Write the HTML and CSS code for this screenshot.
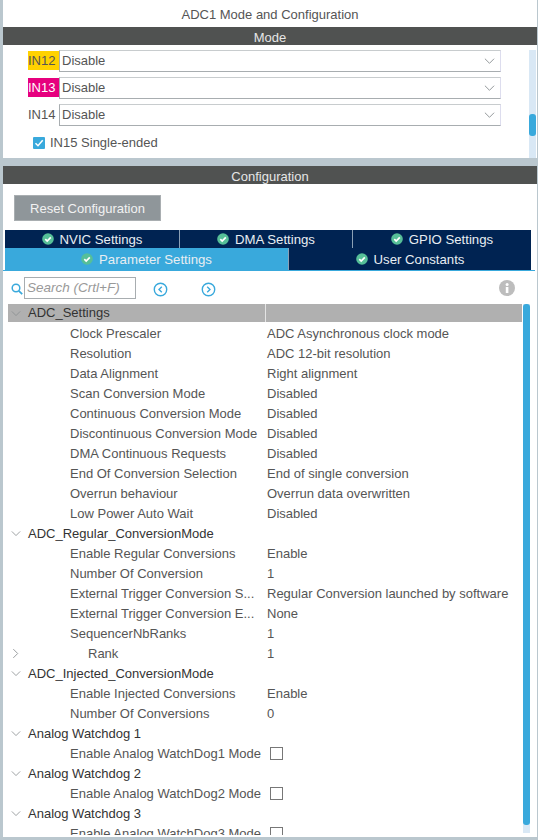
FILE: index.html
```html
<!DOCTYPE html>
<html lang="en">
<head>
<meta charset="UTF-8" />
<title>ADC1 Mode and Configuration</title>
<link rel="stylesheet" href="styles.css">
</head>
<body>

<svg class="defs" width="0" height="0">
  <symbol id="ok" viewBox="0 0 12 12">
    <circle cx="6" cy="6" r="5.8" fill="#56bf98" />
    <path d="M3.3 6.1 5.2 8 8.8 4.3" fill="none" stroke="#fff" stroke-width="1.7" />
  </symbol>
  <symbol id="down" viewBox="0 0 12 8">
    <path d="M1 1.5 6 6.5 11 1.5" fill="none" stroke="#8a8f92" stroke-width="1" />
  </symbol>
  <symbol id="right" viewBox="0 0 8 12">
    <path d="M1.5 1 6.5 6 1.5 11" fill="none" stroke="#8a8f92" stroke-width="1" />
  </symbol>
</svg>

<div class="page">
  <div class="panel mode-panel">
    <div class="title">ADC1 Mode and Configuration</div>
    <div class="bar">Mode</div>
    <div class="mode-body">
      <div class="mode-list">
        <div class="mode-row">
          <span class="pin pin-yellow">IN12</span>
          <div class="select">Disable <svg class="chev"><use href="#down" /></svg></div>
        </div>
        <div class="mode-row">
          <span class="pin pin-pink">IN13</span>
          <div class="select">Disable <svg class="chev"><use href="#down" /></svg></div>
        </div>
        <div class="mode-row">
          <span class="pin">IN14</span>
          <div class="select">Disable <svg class="chev"><use href="#down" /></svg></div>
        </div>
        <label class="single">
          <svg class="tick" viewBox="0 0 12 12">
            <rect width="12" height="12" rx="1" fill="#39a9dc" />
            <path d="M2.5 6.2 5 8.7 9.7 3.2" fill="none" stroke="#fff" stroke-width="1.5" />
          </svg>
          IN15 Single-ended
        </label>
      </div>
      <div class="track top-track"><div class="thumb top-thumb"></div></div>
    </div>
  </div>

  <div class="panel config-panel">
    <div class="bar">Configuration</div>
    <button class="reset">Reset Configuration</button>

    <div class="tabs">
      <div class="tab-row tab-row-a">
        <div class="tab"><svg class="ok"><use href="#ok" /></svg>NVIC Settings</div>
        <div class="tab"><svg class="ok"><use href="#ok" /></svg>DMA Settings</div>
        <div class="tab"><svg class="ok"><use href="#ok" /></svg>GPIO Settings</div>
      </div>
      <div class="tab-row tab-row-b">
        <div class="tab active"><svg class="ok"><use href="#ok" /></svg>Parameter Settings</div>
        <div class="tab"><svg class="ok"><use href="#ok" /></svg>User Constants</div>
      </div>
    </div>

    <div class="search-row">
      <svg class="lens" viewBox="0 0 12 12">
        <circle cx="5" cy="5" r="3.8" fill="none" stroke="#39a9dc" stroke-width="1.5" />
        <path d="M7.8 7.8 11.2 11.2" stroke="#39a9dc" stroke-width="1.7" />
      </svg>
      <div class="search">Search (Crtl+F)</div>
      <svg class="nav nav-prev" viewBox="0 0 14 14">
        <circle cx="7" cy="7" r="5.8" fill="none" stroke="#39a9dc" stroke-width="1.3" />
        <path d="M8.2 4.4 5.6 7 8.2 9.6" fill="none" stroke="#39a9dc" stroke-width="1.3" />
      </svg>
      <svg class="nav nav-next" viewBox="0 0 14 14">
        <circle cx="7" cy="7" r="5.8" fill="none" stroke="#39a9dc" stroke-width="1.3" />
        <path d="M5.8 4.4 8.4 7 5.8 9.6" fill="none" stroke="#39a9dc" stroke-width="1.3" />
      </svg>
      <svg class="info" viewBox="0 0 16 16">
        <circle cx="8" cy="8" r="8" fill="#bdbdbd" />
        <rect x="6.8" y="7" width="2.6" height="6" fill="#fff" />
        <circle cx="8.1" cy="4.5" r="1.5" fill="#fff" />
      </svg>
    </div>

    <div class="tree-wrap">
      <div class="tree">
        <div class="row group head"><svg class="arrow"><use href="#down" /></svg><span class="name">ADC_Settings</span><span class="val"></span></div>
        <div class="row"><span class="name">Clock Prescaler</span><span class="val">ADC Asynchronous clock mode</span></div>
        <div class="row"><span class="name">Resolution</span><span class="val">ADC 12-bit resolution</span></div>
        <div class="row"><span class="name">Data Alignment</span><span class="val">Right alignment</span></div>
        <div class="row"><span class="name">Scan Conversion Mode</span><span class="val">Disabled</span></div>
        <div class="row"><span class="name">Continuous Conversion Mode</span><span class="val">Disabled</span></div>
        <div class="row"><span class="name">Discontinuous Conversion Mode</span><span class="val">Disabled</span></div>
        <div class="row"><span class="name">DMA Continuous Requests</span><span class="val">Disabled</span></div>
        <div class="row"><span class="name">End Of Conversion Selection</span><span class="val">End of single conversion</span></div>
        <div class="row"><span class="name">Overrun behaviour</span><span class="val">Overrun data overwritten</span></div>
        <div class="row"><span class="name">Low Power Auto Wait</span><span class="val">Disabled</span></div>
        <div class="row group"><svg class="arrow"><use href="#down" /></svg><span class="name">ADC_Regular_ConversionMode</span></div>
        <div class="row"><span class="name">Enable Regular Conversions</span><span class="val">Enable</span></div>
        <div class="row"><span class="name">Number Of Conversion</span><span class="val">1</span></div>
        <div class="row"><span class="name">External Trigger Conversion S...</span><span class="val">Regular Conversion launched by software</span></div>
        <div class="row"><span class="name">External Trigger Conversion E...</span><span class="val">None</span></div>
        <div class="row"><span class="name">SequencerNbRanks</span><span class="val">1</span></div>
        <div class="row sub"><svg class="arrow arrow-right"><use href="#right" /></svg><span class="name">Rank</span><span class="val">1</span></div>
        <div class="row group"><svg class="arrow"><use href="#down" /></svg><span class="name">ADC_Injected_ConversionMode</span></div>
        <div class="row"><span class="name">Enable Injected Conversions</span><span class="val">Enable</span></div>
        <div class="row"><span class="name">Number Of Conversions</span><span class="val">0</span></div>
        <div class="row group"><svg class="arrow"><use href="#down" /></svg><span class="name">Analog Watchdog 1</span></div>
        <div class="row"><span class="name">Enable Analog WatchDog1 Mode</span><span class="box"></span></div>
        <div class="row group"><svg class="arrow"><use href="#down" /></svg><span class="name">Analog Watchdog 2</span></div>
        <div class="row"><span class="name">Enable Analog WatchDog2 Mode</span><span class="box"></span></div>
        <div class="row group"><svg class="arrow"><use href="#down" /></svg><span class="name">Analog Watchdog 3</span></div>
        <div class="row"><span class="name">Enable Analog WatchDog3 Mode</span><span class="box"></span></div>
      </div>
      <div class="track tree-track"><div class="thumb tree-thumb"></div></div>
    </div>
  </div>
</div>

</body>
</html>
```

FILE: styles.css
```css
html, body { margin: 0; padding: 0; }
body {
  width: 538px; height: 840px; overflow: hidden;
  background: #bac7ce; color: #555;
  font-family: "Liberation Sans", Arial, sans-serif; font-size: 13px;
}
.defs { position: absolute; }
.page { padding: 0 1px 3px 3px; box-sizing: border-box; height: 840px; display: flex; flex-direction: column; gap: 8px; }
.panel { background: #fff; }

.mode-panel { height: 158px; flex: none; }
.config-panel { flex: 1; min-height: 0; display: flex; flex-direction: column; overflow: hidden; }

.title { height: 27px; line-height: 30px; text-align: center; font-size: 13px; color: #555; }
.bar {
  height: 18px; line-height: 21px; text-align: center;
  background: #505251; color: #e6e6e6; font-size: 13px; flex: none;
}

.mode-body { display: flex; height: 113px; }
.mode-list { flex: 1; padding: 5px 28px 0 25px; }
.mode-row { display: flex; height: 27px; }
.pin { width: 31px; height: 19px; margin-top: 1px; line-height: 19px; font-size: 13px; color: #555; flex: none; }
.pin-yellow { background: #ffd200; }
.pin-pink { background: #e6007e; color: #fff; }
.select {
  flex: 1; height: 18px; padding: 0 0 2px 2px; margin-bottom: 2px;
  display: flex; justify-content: space-between; align-items: center;
  border-left: 1px solid #a8adb0; border-right: 1px solid #dde; border-bottom: 1px solid #a8adb0; border-top: 1px solid #c8ccce;
  font-size: 13px;
}
.chev { width: 11px; height: 8px; margin: 2px 5px 0 0; }
.single { display: flex; align-items: center; gap: 5px; padding: 4px 0 0 5px; font-size: 13px; }
.tick { width: 12px; height: 12px; }

.track { background: #d9e8f5; width: 7px; flex: none; }
.top-track { margin: 5px 1px 0 0; display: flex; flex-direction: column; }
.thumb { background: #39a9dc; border-radius: 3px; }
.top-thumb { height: 22px; margin-top: 64px; }

.reset {
  display: block; align-self: flex-start; flex: none;
  width: 147px; height: 26px; margin: 11px 0 0 11px; padding: 0;
  background: #8f969a; color: #f2f2f2; border: 1px solid #a9aeb1;
  font: 13px "Liberation Sans", Arial, sans-serif;
}

.tabs { margin: 9px 6px 0 2px; flex: none; }
.tab-row { display: grid; color: #e8eef2; }
.tab-row-a { grid-template-columns: 174px 173px 1fr; height: 18px; }
.tab-row-b { grid-template-columns: 283px 1fr; height: 22px; }
.tab {
  background: #002352; display: flex; align-items: center; justify-content: center; gap: 6px;
  font-size: 13.2px; padding-top: 1px; border-left: 1px solid #8ba0b5;
}
.tab:first-child { border-left: 0; }
.tab.active { background: #39a9dc; }
.ok { width: 12px; height: 12px; margin-top: -1px; }

.search-row {
  flex: none; height: 33px; border-top: 1px solid #39a9dc; margin-right: 2px;
  display: flex; align-items: flex-start;
}
.lens { width: 12px; height: 12px; margin: 12px 0 0 8px; flex: none; }
.search {
  width: 108px; height: 20px; margin: 6px 0 0 1px; padding-left: 2px;
  border: 1px solid #a8adb0; line-height: 20px; color: #999; font-style: italic; font-size: 13.5px; flex: none;
}
.nav { width: 15px; height: 15px; margin-top: 11px; flex: none; }
.nav-prev { margin-left: 17px; }
.nav-next { margin-left: 33px; }
.info { width: 16px; height: 16px; margin: 9px 0 0 283px; flex: none; }

.tree-wrap { flex: 1; min-height: 0; display: flex; padding-left: 5px; overflow: hidden; }
.tree { width: 514px; height: 531px; flex: none; overflow: hidden; }
.row { height: 20px; line-height: 19px; display: flex; padding-left: 62px; white-space: nowrap; position: relative; color: #555; font-size: 13px; }
.row.group { padding-left: 20px; color: #333; }
.row.sub { padding-left: 80px; }
.row .name { flex: none; }
.row:not(.group) .name { width: 197px; }
.row.sub .name { width: 179px; }
.group .name { width: auto; }
.val { flex: none; }
.head { background: #b0b0b0; height: 18px; line-height: 18px; margin-bottom: 2px; }
.head .name { width: 237px; border-right: 1px solid #e4e4e4; height: 18px; }
.arrow { position: absolute; left: 3px; top: 6px; width: 10px; height: 7px; }
.arrow-right { left: 4px; top: 4px; width: 7px; height: 11px; }
.box { width: 11px; height: 11px; border: 1px solid #777; margin: 3px 0 0 3px; flex: none; }

.tree-track { margin-left: 1px; height: 529px; display: flex; }
.tree-thumb { width: 7px; height: 521px; }
```
